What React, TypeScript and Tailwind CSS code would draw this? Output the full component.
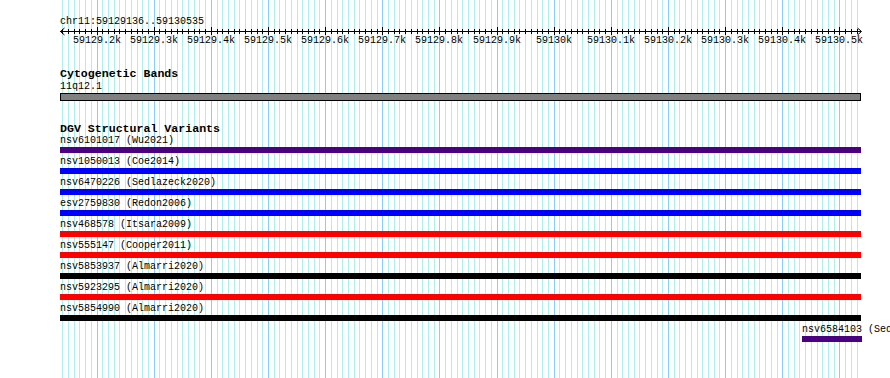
import React from 'react';

const START = 59129136;
const END = 59130535;
const PX_PER_BP = 800 / (END - START + 1);
const xOf = (bp: number) => 60 + (bp - START) * PX_PER_BP;

const steps: number[] = [];
for (let b = 59129140; b <= 59130530; b += 10) steps.push(b);

const fmt = (b: number) => (b % 1000 === 0 ? `${b / 1000}k` : `${(b / 1000).toFixed(1)}k`);

const variants = [
  { label: 'nsv6101017 (Wu2021)', bar: 'bg-[#4b0082]' },
  { label: 'nsv1050013 (Coe2014)', bar: 'bg-[#0000ff]' },
  { label: 'nsv6470226 (Sedlazeck2020)', bar: 'bg-[#0000ff]' },
  { label: 'esv2759830 (Redon2006)', bar: 'bg-[#0000ff]' },
  { label: 'nsv468578 (Itsara2009)', bar: 'bg-[#ff0000]' },
  { label: 'nsv555147 (Cooper2011)', bar: 'bg-[#ff0000]' },
  { label: 'nsv5853937 (Almarri2020)', bar: 'bg-black' },
  { label: 'nsv5923295 (Almarri2020)', bar: 'bg-[#ff0000]' },
  { label: 'nsv5854990 (Almarri2020)', bar: 'bg-black' },
];

const Grid: React.FC = () => (
  <svg className="absolute inset-0" width={890} height={378} shapeRendering="crispEdges">
    {steps.map((b) => {
      const x = Math.round(xOf(b)) + 0.5;
      return (
        <line key={b} x1={x} x2={x} y1={0} y2={378} stroke={b % 100 === 0 ? '#87cefa' : '#afeeee'} strokeWidth={1} />
      );
    })}
  </svg>
);

const Ruler: React.FC = () => (
  <svg width={890} height={48} className="block" fontFamily="'Liberation Mono', monospace" fontSize={10}>
    <text x={60} y={24} fill="#000">chr11:59129136..59130535</text>
    <g shapeRendering="crispEdges" stroke="#000" strokeWidth={1}>
      <line x1={60} x2={861} y1={31.5} y2={31.5} />
      {steps.map((b) => {
        const x = Math.round(xOf(b)) + 0.5;
        const major = b % 100 === 0;
        return <line key={b} x1={x} x2={x} y1={major ? 27 : 29} y2={major ? 35 : 34} />;
      })}
    </g>
    <g stroke="#000" strokeWidth={1} fill="none">
      <polyline points="64.5,28 60.5,31.5 64.5,35" />
      <polyline points="857.5,28 861.5,31.5 857.5,35" />
    </g>
    {steps
      .filter((b) => b % 100 === 0)
      .map((b) => (
        <text key={b} x={Math.round(xOf(b))} y={43} textAnchor="middle" fill="#000">
          {fmt(b)}
        </text>
      ))}
  </svg>
);

export default function App() {
  return (
    <div className="relative w-[890px] h-[378px] overflow-hidden bg-white text-black font-['Liberation_Mono','DejaVu_Sans_Mono',monospace]">
      <Grid />
      <div className="relative flex flex-col">
        <Ruler />

        <div className="pl-[60px] flex flex-col">
          <div className="mt-[20px] h-[12px] leading-[12px] text-[11.6px] font-bold whitespace-nowrap">Cytogenetic Bands</div>
          <div className="h-[13px] leading-[13px] text-[10px] whitespace-nowrap">11q12.1</div>
          <div className="w-[801px] h-[8px] border border-black bg-[#808080]" />

          <div className="mt-[24px] h-[7px] leading-[7px] text-[11.6px] font-bold whitespace-nowrap">DGV Structural Variants</div>
          {variants.map((v) => (
            <div key={v.label} className="flex flex-col">
              <div className="h-[15px] pt-[2px] leading-[13px] text-[10px] whitespace-nowrap">{v.label}</div>
              <div className={`w-[801px] h-[6px] ${v.bar}`} />
            </div>
          ))}
          <div className="ml-[742px] flex flex-col">
            <div className="h-[15px] pt-[2px] leading-[13px] text-[10px] whitespace-nowrap">nsv6584103 (Sedlazeck2020)</div>
            <div className="w-[60px] h-[6px] bg-[#4b0082]" />
          </div>
        </div>
      </div>
    </div>
  );
}
